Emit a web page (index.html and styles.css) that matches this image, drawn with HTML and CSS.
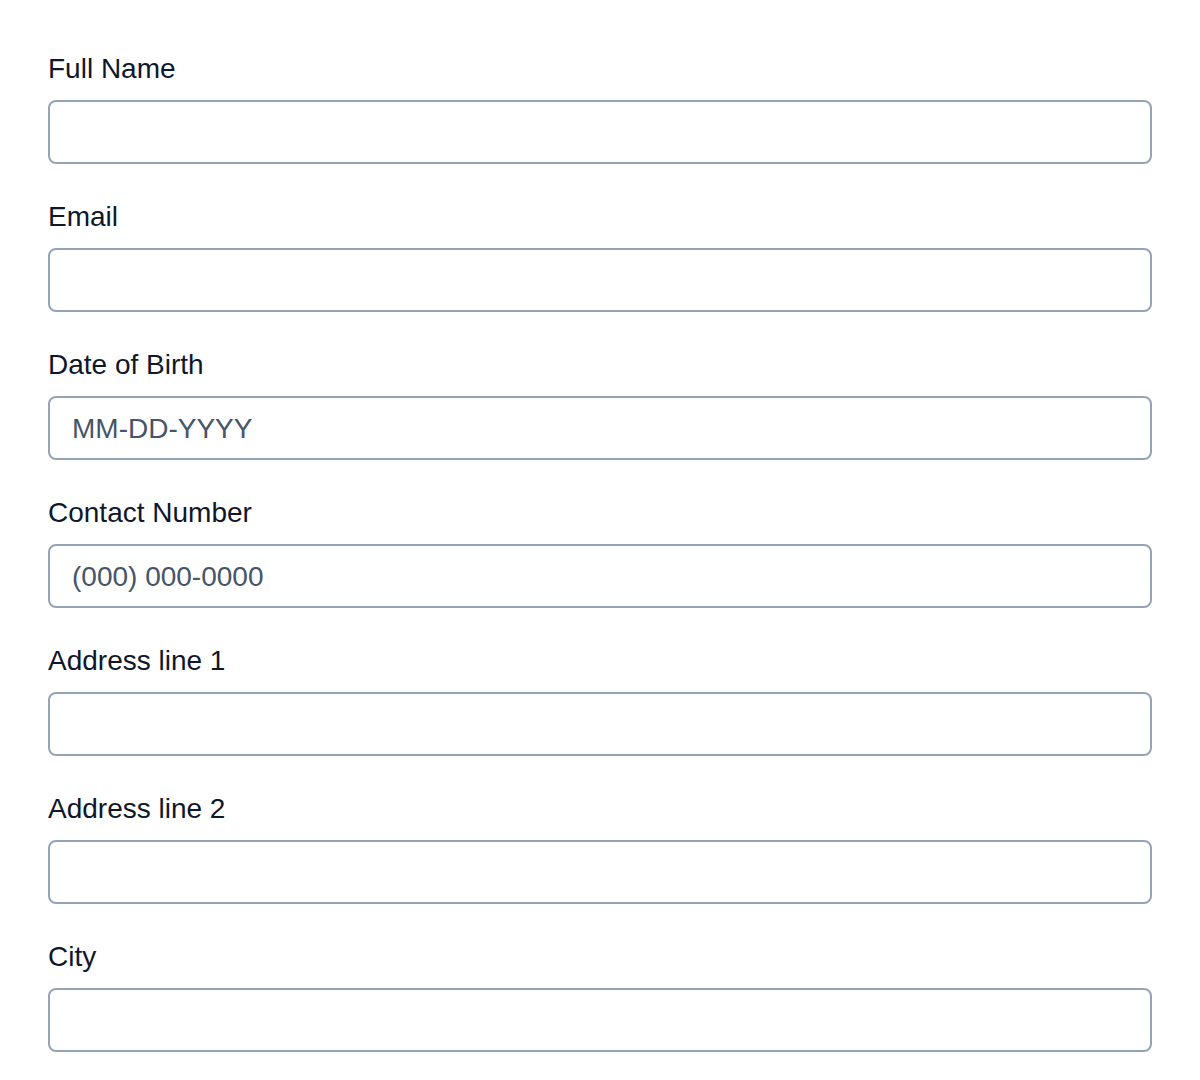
FILE: index.html
```html
<!DOCTYPE html>
<html lang="en">
<head>
<meta charset="utf-8">
<title>Form</title>
<link rel="stylesheet" href="styles.css">
</head>
<body>
<form class="form">
  <div class="field">
    <label class="label" for="name">Full Name</label>
    <input class="input" id="name" type="text">
  </div>
  <div class="field">
    <label class="label" for="email">Email</label>
    <input class="input" id="email" type="text">
  </div>
  <div class="field">
    <label class="label" for="dob">Date of Birth</label>
    <input class="input" id="dob" type="text" placeholder="MM-DD-YYYY">
  </div>
  <div class="field">
    <label class="label" for="phone">Contact Number</label>
    <input class="input" id="phone" type="text" placeholder="(000) 000-0000">
  </div>
  <div class="field">
    <label class="label" for="a1">Address line 1</label>
    <input class="input" id="a1" type="text">
  </div>
  <div class="field">
    <label class="label" for="a2">Address line 2</label>
    <input class="input" id="a2" type="text">
  </div>
  <div class="field">
    <label class="label" for="city">City</label>
    <input class="input" id="city" type="text">
  </div>
</form>
</body>
</html>
```
FILE: styles.css
```css
html, body {
  margin: 0;
  padding: 0;
  background: #ffffff;
}
body {
  font-family: "Liberation Sans", Arial, sans-serif;
  color: #0f172a;
}
.form {
  padding: 48px 48px 0 48px;
  display: flex;
  flex-direction: column;
  gap: 32px;
}
.field {
  display: flex;
  flex-direction: column;
  gap: 11px;
}
.label {
  font-size: 28px;
  line-height: 40px;
  padding-top: 1px;
  color: #0f172a;
}
.input {
  box-sizing: border-box;
  height: 64px;
  width: 100%;
  margin: 0;
  border: 2px solid #94a3b8;
  border-radius: 8px;
  background: #ffffff;
  padding: 2px 22px 0 22px;
  font-family: "Liberation Sans", Arial, sans-serif;
  font-size: 28px;
  color: #0f172a;
  outline: none;
}
.input::placeholder {
  color: #475569;
  opacity: 1;
}
```
